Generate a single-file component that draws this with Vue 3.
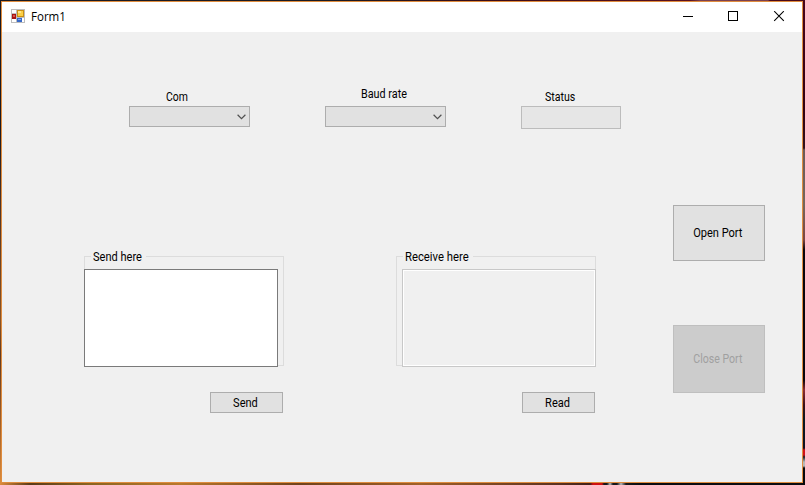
<script setup>
const fields = [
  { label: 'Com', kind: 'combo', cls: 'com' },
  { label: 'Baud rate', kind: 'combo', cls: 'baud' },
  { label: 'Status', kind: 'text', cls: 'status' },
]
const groups = [
  { title: 'Send here', action: 'Send', cls: 'send' },
  { title: 'Receive here', action: 'Read', cls: 'receive' },
]
</script>

<template>
  <div class="desktop">
    <div class="window">
      <header class="titlebar">
        <svg class="app-icon" width="14" height="14" viewBox="0 0 14 14" shape-rendering="crispEdges">
          <rect width="14" height="14" fill="#bdbdbd" />
          <rect x="1" y="1" width="4" height="3" fill="#fff" />
          <rect x="1" y="10" width="4" height="3" fill="#fff" />
          <rect x="11" y="9" width="2" height="4" fill="#fff" />
          <rect x="1" y="5" width="4" height="5" fill="#a81414" />
          <rect x="2" y="6" width="2" height="2" fill="#d8584c" />
          <rect x="6" y="1" width="7" height="7" fill="#c98f14" />
          <rect x="7" y="2" width="5" height="5" fill="#fbcf45" />
          <rect x="7" y="2" width="3" height="2" fill="#ffe58a" />
          <rect x="6" y="9" width="5" height="4" fill="#3668c8" />
          <rect x="7" y="10" width="3" height="1" fill="#82aaf2" />
        </svg>
        <span class="title"><span class="txt">Form1</span></span>
        <svg class="controls" width="106" height="12" viewBox="0 0 106 12">
          <path d="M0 5.5H10" stroke="#000" shape-rendering="crispEdges" />
          <rect x="45.5" y="0.5" width="9" height="9" fill="none" stroke="#000" shape-rendering="crispEdges" />
          <path d="M91.2 0.2L100.8 9.8M100.8 0.2L91.2 9.8" stroke="#000" stroke-width="1.1" />
        </svg>
      </header>
      <main class="client">
        <section class="left">
          <div class="fields">
            <div v-for="f in fields" :key="f.label" class="field" :class="f.cls">
              <div class="label"><span class="txt">{{ f.label }}</span></div>
              <div :class="f.kind">
                <svg v-if="f.kind === 'combo'" width="9" height="6" viewBox="0 0 9 6">
                  <path d="M0.6 0.8L4.5 4.6L8.4 0.8" fill="none" stroke="#505050" stroke-width="1.2" />
                </svg>
              </div>
            </div>
          </div>
          <div class="groups">
            <div v-for="g in groups" :key="g.title" class="column" :class="g.cls">
              <div class="group">
                <div class="legend"><span class="txt">{{ g.title }}</span></div>
                <div class="area"></div>
              </div>
              <div class="button small"><span class="txt">{{ g.action }}</span></div>
            </div>
          </div>
        </section>
        <aside class="right">
          <div class="button open"><span class="txt">Open Port</span></div>
          <div class="button close"><span class="txt">Close Port</span></div>
        </aside>
      </main>
    </div>
  </div>
</template>

<style>
body { margin: 0; overflow: hidden; }
</style>

<style scoped>
* { box-sizing: border-box; }
.desktop {
  width: 805px;
  height: 485px;
  padding: 1px 2px 2px 1px;
  background:
    linear-gradient(90deg, #191a22 0 330px, #3c0a16 500px, #5a1020 690px, #7a4050 700px 768px, #4a0818 770px) 0 0 / 805px 1px no-repeat,
    linear-gradient(#191a22 0, #191a22 130px, #4a3328 200px, #8a5426 320px, #603a22 355px, #a8642a 430px, #dc8c3c 485px) 0 0 / 1px 485px no-repeat,
    linear-gradient(#48041c 0, #30000f 110px, #30101c 148px, #6c5a58 150px, #75665c 205px, #7c4440 240px, #08040a 250px, #08040a 380px, #8c2c34 390px, #381018 405px, #081820 420px, #101020 448px, #d01018 450px, #d01018 455px, #182028 457px, #b8b8b8 462px, #b8b8b8 466px, #08080c 468px) 803px 0 / 2px 485px no-repeat,
    linear-gradient(90deg, #dc8c3c 0, #5a3a18 30px, #8a6420 90px, #b8782c 180px, #70421c 300px, #a06028 420px, #5a3020 560px, #422018 590px, #d01010 593px 602px, #18181a 604px 607px, #b8b8b8 610px, #18181a 613px 617px, #b8b8b8 621px, #18181a 626px, #0c0c10 640px) 0 483px / 805px 2px no-repeat,
    #111;
  font-family: Roboto, "Liberation Sans", sans-serif;
  font-size: 12px;
  color: #000;
}
.window {
  width: 802px;
  height: 482px;
  border: 1px solid #df8c3e;
  background: #f0f0f0;
}
.titlebar {
  height: 30px;
  background: #fff;
  display: flex;
  align-items: flex-start;
  padding: 7px 18px 0 9px;
}
.app-icon { flex: none; }
.title {
  margin-left: 6px;
  flex: 1;
  line-height: 16px;
  font-family: "Open Sans", "Noto Sans", sans-serif;
}
.controls { flex: none; margin: 2px -5px 0 0; }
.client { display: flex; height: 450px; }
.txt {
  display: inline-block;
  white-space: nowrap;
  transform: scaleX(0.92);
  transform-origin: left center;
}
.title .txt { transform: scaleX(0.96); }
.com .txt { transform: scaleX(0.87); }
.baud .txt { transform: scaleX(0.9); }
.status .txt { transform: scaleX(0.88); }
.receive .legend .txt { transform: scaleX(0.94); }
.left { width: 650px; }
.fields { display: flex; gap: 75px; padding: 56px 0 0 127px; }
.field { width: 121px; }
.label { height: 18px; line-height: 18px; }
.com .label { padding-left: 37px; }
.baud .label { padding-left: 36px; line-height: 12px; }
.status .label { padding-left: 24px; }
.combo {
  height: 21px;
  border: 1px solid #adadad;
  background: #e1e1e1;
  display: flex;
  justify-content: flex-end;
  align-items: center;
  padding-right: 3px;
}
.text {
  width: 100px;
  height: 23px;
  border: 1px solid #bcbcbc;
  background: #e6e6e6;
}
.groups { display: flex; gap: 112px; padding: 127px 0 0 82px; }
.column { width: 200px; }
.group { height: 110px; border: 1px solid #dcdcdc; }
.legend {
  width: max-content;
  height: 16px;
  margin: -4px 0 0 6px;
  padding: 0 2px;
  line-height: 9px;
  background: #f0f0f0;
}
.send .legend { margin-right: 0; padding-right: 0; }
.receive .legend { padding-right: 0; }
.area { width: 194px; height: 98px; }
.send .area { margin-left: -1px; background: #fff; border: 1px solid #7a7a7a; }
.receive .area {
  margin-left: 5px;
  background: #f0f0f0;
  border: 1px solid #c8c8c8;
  box-shadow: inset 0 0 0 1px #fff;
}
.button {
  display: flex;
  align-items: center;
  justify-content: center;
  border: 1px solid #adadad;
  background: #e1e1e1;
}
.button .txt { transform-origin: center; }
.close .txt { transform: scaleX(0.88); }
.small { width: 73px; height: 21px; margin: 26px 0 0 126px; padding-right: 2px; }
.right { padding: 173px 0 0 21px; }
.open { width: 92px; height: 56px; padding-right: 3px; }
.close {
  width: 92px;
  height: 68px;
  margin-top: 64px;
  padding-right: 3px;
  color: #a0a0a0;
  background: #ccc;
  border-color: #bfbfbf;
}
</style>
